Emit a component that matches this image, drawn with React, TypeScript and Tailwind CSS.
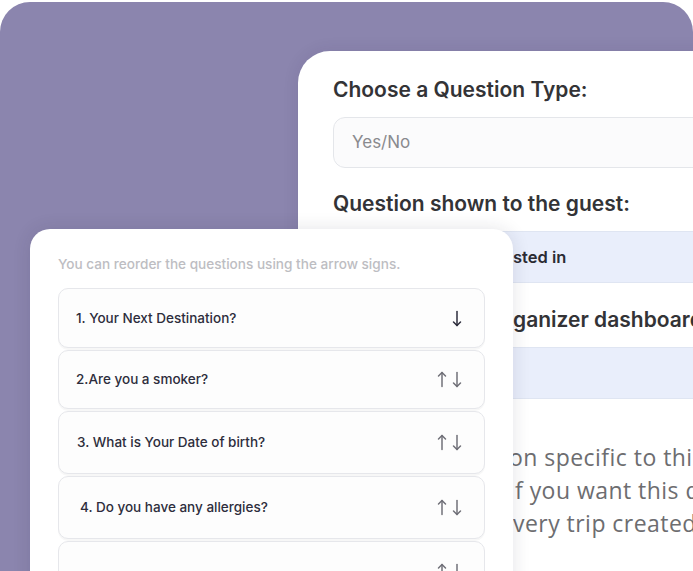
import React from "react";

const items = [
  { text: "1. Your Next Destination?", h: "h-[60px]", pl: "pl-[17px]", up: false, tx: "" },
  { text: "2.Are you a smoker?", h: "h-[59px]", pl: "pl-[17px]", up: true, tx: "" },
  { text: "3. What is Your Date of birth?", h: "h-[63px]", pl: "pl-[18px]", up: true, tx: "" },
  { text: "4. Do you have any allergies?", h: "h-[63px]", pl: "pl-[21px]", up: true, tx: "" },
  { text: "5. Do you need a visa?", h: "h-[60px]", pl: "pl-[18px]", up: true, tx: "pt-[22px]" },
];

function ArrowDown({ className }: { className: string }) {
  return (
    <svg width="10" height="17" viewBox="0 0 10 17" fill="none" stroke="currentColor" strokeWidth="1.5" strokeLinecap="round" strokeLinejoin="round" className={className}>
      <path d="M5 1.5V15.5" />
      <path d="M1.5 12L5 15.5L8.5 12" />
    </svg>
  );
}

function ArrowUp({ className }: { className: string }) {
  return (
    <svg width="10" height="17" viewBox="0 0 10 17" fill="none" stroke="currentColor" strokeWidth="1.5" strokeLinecap="round" strokeLinejoin="round" className={className}>
      <path d="M5 15.5V1.5" />
      <path d="M1.5 5L5 1.5L8.5 5" />
    </svg>
  );
}

export default function App() {
  return (
    <div className="h-[571px] w-[693px] overflow-hidden bg-white pt-[2px]" style={{ fontFamily: "Inter, 'Liberation Sans', sans-serif" }}>
      <div className="relative h-[600px] w-[693px] overflow-hidden rounded-t-[30px] bg-[#8b85ae]">
        {/* Right card */}
        <div className="absolute left-[298px] top-[49px] h-[600px] w-[480px] rounded-tl-[32px] bg-white pl-[35px] pt-[25px] shadow-[0_0_16px_rgba(40,30,80,0.10)]">
          <div className="whitespace-nowrap text-[21px] font-semibold leading-[28px] text-[#333336]">Choose a Question Type:</div>
          <div className="mt-[13px] flex h-[51px] items-center rounded-[12px] border border-[#e4e6ea] bg-[#fbfbfc] pl-[18px] text-[17px] text-[#8a8a8e]">
            Yes/No
          </div>
          <div className="mt-[22px] whitespace-nowrap text-[21px] font-semibold leading-[28px] text-[#333336]">Question shown to the guest:</div>
          <div className="mt-[13px] flex h-[52px] items-center whitespace-nowrap border-y border-[#dfe5f2] bg-[#e9eefb] pl-[19px] text-[16.5px] font-semibold text-[#2b2b33]">
            <span className="inline-block w-[161px] shrink-0 overflow-hidden">What are you intere</span>
            <span className="shrink-0">sted in</span>
          </div>
          <div className="flex h-[64px] items-center whitespace-nowrap pt-[10px] text-[21px] font-semibold text-[#333336]">
            <span className="inline-block w-[180px] shrink-0 overflow-hidden">Display on the or</span>
            <span className="shrink-0">ganizer dashboard</span>
          </div>
          <div className="h-[52px] border-y border-[#dfe5f2] bg-[#e9eefb]" />
          <div className="mt-[42px] whitespace-nowrap text-[23px] leading-[33px] tracking-[0.02em] text-[#6d6d70]" style={{ fontFamily: "'Open Sans', sans-serif" }}>
            <div className="flex">
              <span className="inline-block w-[176px] shrink-0 overflow-hidden">This is a questi</span>
              <span className="shrink-0">on specific to this trip.</span>
            </div>
            <div className="flex">
              <span className="inline-block w-[182px] shrink-0 overflow-hidden">Tick the toggle i</span>
              <span className="shrink-0">f you want this question</span>
            </div>
            <div className="flex">
              <span className="inline-block w-[180px] shrink-0 overflow-hidden">to be added to e</span>
              <span className="shrink-0">very trip created.</span>
            </div>
          </div>
        </div>

        {/* Left card */}
        <div className="absolute left-[30px] top-[227px] h-[400px] w-[483px] rounded-t-[20px] bg-white px-[28px] pt-[26px] shadow-[0_0_18px_rgba(30,30,60,0.12)]">
          <div className="whitespace-nowrap text-[13.6px] font-medium leading-[18px] text-[#bdbdc2]">
            You can reorder the questions using the arrow signs.
          </div>
          <div className="mt-[15px] flex flex-col gap-[2px]">
            {items.map((it, i) => (
              <div
                key={i}
                className={`flex ${it.h} items-center justify-between rounded-[10px] border border-[#e6e7eb] bg-[#fdfdfd] ${it.pl} pr-[22px] shadow-[0_2px_0_rgba(0,0,0,0.03)]`}
              >
                <span className={`text-[13.5px] font-medium text-[#2d2d3c] ${it.tx}`}>{it.text}</span>
                <span className="flex items-center gap-[5px]">
                  {it.up && <ArrowUp className="text-[#707078]" />}
                  <ArrowDown className={it.up ? "text-[#707078]" : "text-[#2d2d3c]"} />
                </span>
              </div>
            ))}
          </div>
        </div>
      </div>
    </div>
  );
}
